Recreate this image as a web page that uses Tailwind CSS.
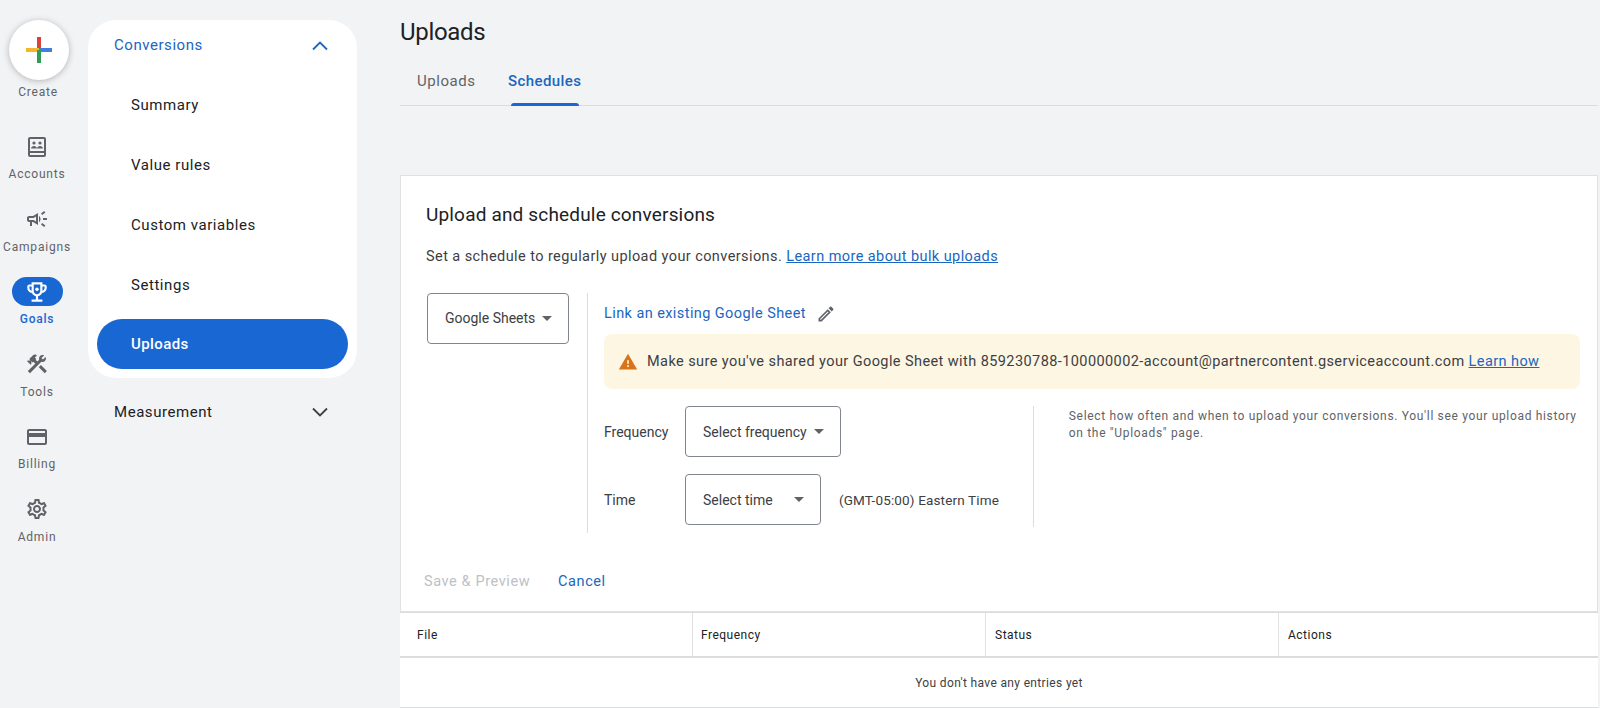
<!DOCTYPE html>
<html lang="en">
<head>
  <meta charset="utf-8" />
  <title>Uploads</title>
  <script src="https://cdn.jsdelivr.net/npm/@tailwindcss/browser@4"></script>
</head>
<body class="bg-[#f2f3f5] font-['Roboto',sans-serif] text-[#3c4043]">
  <div class="flex h-[708px] w-[1600px] overflow-hidden">

    <!-- Icon rail -->
    <aside class="w-[88px] shrink-0 flex flex-col items-center pt-5 pr-[14px] text-[12px] leading-4 tracking-[0.8px] text-[#5f6368]">
      <div class="ml-[3px] w-[60px] h-[60px] rounded-full bg-white shadow-[0_1px_6px_rgba(60,64,67,0.35)] flex items-center justify-center">
        <svg width="26" height="26" viewBox="0 0 26 26" fill="none" stroke-width="4">
          <path d="M13 0v13" stroke="#d9423a" />
          <path d="M0 13h13" stroke="#f4b62a" />
          <path d="M13 13h13" stroke="#3f7fe0" />
          <path d="M13 13v13" stroke="#2f9e55" />
        </svg>
      </div>
      <span class="ml-[2px] mt-1 mb-[32px]">Create</span>

      <div class="flex flex-col gap-[22.5px] items-center">
        <a class="flex flex-col items-center gap-[5px]">
          <span class="h-[29px] flex items-center">
            <svg width="24" height="24" viewBox="0 0 24 24" fill="#5f6368"><path d="M5 2h14a2 2 0 0 1 2 2v16a2 2 0 0 1-2 2H5a2 2 0 0 1-2-2V4a2 2 0 0 1 2-2zm0 2v12h14V4H5zm0 14v2h14v-2H5z"/><circle cx="9" cy="8" r="1.6"/><circle cx="15" cy="8" r="1.6"/><path d="M6 13.5c0-1.6 1.6-2.5 3-2.5s3 .9 3 2.5H6zm6 0c0-1.6 1.6-2.5 3-2.5s3 .9 3 2.5h-6z"/></svg>
          </span>
          <span>Accounts</span>
        </a>
        <a class="flex flex-col items-center gap-[5px]">
          <span class="h-[29px] flex items-center">
            <svg width="24" height="24" viewBox="0 0 24 24" fill="#5f6368"><path d="M18 11v2h4v-2h-4zm-2 6.61c.96.71 2.21 1.65 3.2 2.39.4-.53.8-1.07 1.2-1.6-.99-.74-2.24-1.68-3.2-2.4-.4.54-.8 1.08-1.2 1.61zM20.4 5.6c-.4-.53-.8-1.07-1.2-1.6-.99.74-2.24 1.68-3.2 2.4.4.53.8 1.07 1.2 1.6.96-.72 2.21-1.65 3.2-2.4zM4 9c-1.1 0-2 .9-2 2v2c0 1.1.9 2 2 2h1v4h2v-4h1l5 3V6L8 9H4zm5.03 1.71L11 9.53v4.94l-1.97-1.18-.48-.29H4v-2h4.55l.48-.29zM15.5 12c0-1.33-.58-2.53-1.5-3.35v6.69c.92-.81 1.5-2.01 1.5-3.34z"/></svg>
          </span>
          <span>Campaigns</span>
        </a>
        <a class="flex flex-col items-center gap-[5px] text-[#1967d2] font-medium">
          <span class="h-[29px] w-[51px] rounded-full bg-[#1967d2] flex items-center justify-center">
            <svg width="26" height="26" viewBox="0 0 24 24" fill="#fff"><path d="M19 5h-2V3H7v2H5c-1.1 0-2 .9-2 2v1c0 2.55 1.92 4.63 4.39 4.94.63 1.5 1.98 2.63 3.61 2.96V19H7v2h10v-2h-4v-3.1c1.63-.33 2.98-1.46 3.61-2.96C19.08 12.63 21 10.55 21 8V7c0-1.1-.9-2-2-2zM5 8V7h2v3.82C5.84 10.4 5 9.3 5 8zm7 6c-1.65 0-3-1.35-3-3V5h6v6c0 1.65-1.35 3-3 3zm7-6c0 1.3-.84 2.4-2 2.82V7h2v1z"/><circle cx="12" cy="9.5" r="1.6"/></svg>
          </span>
          <span>Goals</span>
        </a>
        <a class="flex flex-col items-center gap-[5px]">
          <span class="h-[29px] flex items-center">
            <svg width="24" height="24" viewBox="0 0 24 24" fill="#5f6368"><path d="M13.783 15.172l2.121-2.121 5.996 5.996-2.121 2.121zM17.5 10c1.93 0 3.5-1.57 3.5-3.5 0-.58-.16-1.12-.41-1.6l-2.7 2.7-1.49-1.49 2.7-2.7c-.48-.25-1.02-.41-1.6-.41C15.57 3 14 4.57 14 6.5c0 .41.08.8.21 1.16l-1.85 1.85-1.78-1.78.71-.71-1.41-1.41L12 3.49c-1.17-1.17-3.07-1.17-4.24 0L4.22 7.03l1.41 1.41H2.81l-.71.71 3.54 3.54.71-.71V9.15l1.41 1.41.71-.71 1.78 1.78-7.41 7.41 2.12 2.12L16.34 9.79c.36.13.75.21 1.16.21z"/></svg>
          </span>
          <span>Tools</span>
        </a>
        <a class="flex flex-col items-center gap-[5px]">
          <span class="h-[29px] flex items-center">
            <svg width="24" height="24" viewBox="0 0 24 24" fill="#5f6368"><path d="M20 4H4c-1.11 0-1.99.89-1.99 2L2 18c0 1.11.89 2 2 2h16c1.11 0 2-.89 2-2V6c0-1.11-.89-2-2-2zm0 14H4v-6h16v6zm0-10H4V6h16v2z"/></svg>
          </span>
          <span>Billing</span>
        </a>
        <a class="flex flex-col items-center gap-[5px]">
          <span class="h-[29px] flex items-center">
            <svg width="24" height="24" viewBox="0 0 24 24" fill="#5f6368"><path d="M19.43 12.98c.04-.32.07-.64.07-.98 0-.34-.03-.66-.07-.98l2.11-1.65c.19-.15.24-.42.12-.64l-2-3.46c-.09-.16-.26-.25-.44-.25-.06 0-.12.01-.17.03l-2.49 1c-.52-.4-1.08-.73-1.69-.98l-.38-2.65C14.46 2.18 14.25 2 14 2h-4c-.25 0-.46.18-.49.42l-.38 2.65c-.61.25-1.17.59-1.69.98l-2.49-1c-.06-.02-.12-.03-.18-.03-.17 0-.34.09-.43.25l-2 3.46c-.13.22-.07.49.12.64l2.11 1.65c-.04.32-.07.65-.07.98 0 .33.03.66.07.98l-2.11 1.65c-.19.15-.24.42-.12.64l2 3.46c.09.16.26.25.44.25.06 0 .12-.01.17-.03l2.49-1c.52.4 1.08.73 1.69.98l.38 2.65c.03.24.24.42.49.42h4c.25 0 .46-.18.49-.42l.38-2.65c.61-.25 1.17-.59 1.69-.98l2.49 1c.06.02.12.03.18.03.17 0 .34-.09.43-.25l2-3.46c.12-.22.07-.49-.12-.64l-2.11-1.65zm-1.98-1.71c.04.31.05.52.05.73 0 .21-.02.43-.05.73l-.14 1.13.89.7 1.08.84-.7 1.21-1.27-.51-1.04-.42-.9.68c-.43.32-.84.56-1.25.73l-1.06.43-.16 1.13-.2 1.35h-1.4l-.19-1.35-.16-1.13-1.06-.43c-.43-.18-.83-.41-1.23-.71l-.91-.7-1.06.43-1.27.51-.7-1.21 1.08-.84.89-.7-.14-1.13c-.03-.31-.05-.54-.05-.74s.02-.43.05-.73l.14-1.13-.89-.7-1.08-.84.7-1.21 1.27.51 1.04.42.9-.68c.43-.32.84-.56 1.25-.73l1.06-.43.16-1.13.2-1.35h1.39l.19 1.35.16 1.13 1.06.43c.43.18.83.41 1.23.71l.91.7 1.06-.43 1.27-.51.7 1.21-1.07.85-.89.7.14 1.13zM12 8c-2.21 0-4 1.79-4 4s1.79 4 4 4 4-1.79 4-4-1.79-4-4-4zm0 6c-1.1 0-2-.9-2-2s.9-2 2-2 2 .9 2 2-.9 2-2 2z"/></svg>
          </span>
          <span>Admin</span>
        </a>
      </div>
    </aside>

    <!-- Section nav -->
    <nav class="w-[269px] shrink-0 mt-5 text-[15px] tracking-[0.55px] text-[#202124]">
      <div class="bg-white rounded-[28px] h-[358px] px-[9px]">
        <div class="h-[51px] pl-[17px] pr-[16px] flex items-center justify-between text-[#1a66c0]">
          <span>Conversions</span>
          <svg width="24" height="24" viewBox="0 0 24 24" fill="none" stroke="#1a66c0" stroke-width="1.8"><path d="M5 15.5l7-7 7 7"/></svg>
        </div>
        <div class="h-[60px] mt-[4px] pl-[34px] flex items-center">Summary</div>
        <div class="h-[60px] pl-[34px] flex items-center">Value rules</div>
        <div class="h-[60px] pl-[34px] flex items-center">Custom variables</div>
        <div class="h-[60px] pl-[34px] flex items-center">Settings</div>
        <div class="h-[50px] mt-[4px] pl-[34px] flex items-center rounded-full bg-[#1967d2] text-white font-medium tracking-[0.4px]">Uploads</div>
      </div>
      <div class="h-[50px] mt-[9px] pl-[26px] pr-[25px] flex items-center justify-between">
        <span>Measurement</span>
        <svg width="24" height="24" viewBox="0 0 24 24" fill="none" stroke="#3c4043" stroke-width="1.8"><path d="M5 8.5l7 7 7-7"/></svg>
      </div>
    </nav>

    <!-- Main -->
    <main class="ml-[43px] w-[1198px] shrink-0">
      <h1 class="mt-[18px] h-[28px] leading-[28px] text-[24px] tracking-[-0.3px] text-[#202124]">Uploads</h1>
      <div class="mt-[17px] h-[43px] border-b border-[#dadce0] flex text-[15px] tracking-[0.4px] font-medium">
        <a class="pl-[17px] w-[108px] pt-[7px] font-normal tracking-[0.55px] text-[#5f6368]">Uploads</a>
        <a class="relative pt-[7px] text-[#1a66c0]">
          Schedules
          <span class="absolute left-[3px] right-[2px] -bottom-px h-[3px] rounded-t-[3px] bg-[#1967d2]"></span>
        </a>
      </div>

      <section class="mt-[69px] bg-white border border-[#dfe1e5] h-[437px] pl-[26px] pr-[17px] flex flex-col">
        <h2 class="-ml-px mt-[27px] h-[24px] leading-6 text-[19px] tracking-[0.17px] text-[#202124]">Upload and schedule conversions</h2>
        <p class="-ml-px mt-[20px] h-[20px] leading-5 text-[14.5px] tracking-[0.42px]">
          Set a schedule to regularly upload your conversions.
          <a class="text-[#1a66c0] underline">Learn more about bulk uploads</a>
        </p>

        <div class="mt-[26px] flex">
          <div class="w-[142px] h-[51px] border border-[#80868b] rounded-[4px] flex items-center pl-[17px] pr-[16px] justify-between text-[14px]">
            <span>Google Sheets</span>
            <span class="w-0 h-0 border-x-[5px] border-x-transparent border-t-[5px] border-t-[#5f6368]"></span>
          </div>

          <div class="ml-[18px] w-[1px] h-[240px] bg-[#dadce0]"></div>

          <div class="ml-[16px] w-[976px]">
            <div class="mt-[11px] h-[20px] flex items-center gap-[10px] text-[14.5px] tracking-[0.42px] text-[#1a66c0]">
              <span>Link an existing Google Sheet</span>
              <svg width="20" height="20" viewBox="0 0 24 24" fill="#5f6368"><path d="M14.06 9.02l.92.92L5.92 19H5v-.92l9.06-9.06M17.66 3c-.25 0-.51.1-.7.29l-1.83 1.83 3.75 3.75 1.83-1.83c.39-.39.39-1.02 0-1.41l-2.34-2.34c-.2-.2-.45-.29-.71-.29zm-3.6 3.19L3 17.25V21h3.75L17.81 9.94l-3.75-3.75z"/></svg>
            </div>
            <div class="mt-[10px] h-[55px] rounded-[8px] bg-[#fdf6e3] flex items-center pl-[14px] gap-[9px] text-[14.5px] tracking-[0.42px]">
              <svg width="20" height="20" viewBox="0 0 24 24" fill="#d9731a"><path d="M1 21h22L12 2 1 21zm12-3h-2v-2h2v2zm0-4h-2v-4h2v4z"/></svg>
              <span>Make sure you've shared your Google Sheet with 859230788-100000002-account@partnercontent.gserviceaccount.com <a class="text-[#1a66c0] underline">Learn how</a></span>
            </div>

            <div class="mt-[17px] flex">
              <div class="w-[432px] text-[14px]">
                <div class="h-[51px] flex items-center">
                  <span class="w-[81px] mt-[2px]">Frequency</span>
                  <div class="w-[156px] h-[51px] border border-[#80868b] rounded-[4px] flex items-center pl-[17px] pr-[16px] justify-between">
                    <span class="mt-[2px]">Select frequency</span>
                    <span class="w-0 h-0 border-x-[5px] border-x-transparent border-t-[5px] border-t-[#5f6368]"></span>
                  </div>
                </div>
                <div class="mt-[17px] h-[51px] flex items-center">
                  <span class="w-[81px] mt-[2px]">Time</span>
                  <div class="w-[136px] h-[51px] border border-[#80868b] rounded-[4px] flex items-center pl-[17px] pr-[16px] justify-between">
                    <span class="mt-[2px]">Select time</span>
                    <span class="w-0 h-0 border-x-[5px] border-x-transparent border-t-[5px] border-t-[#5f6368]"></span>
                  </div>
                  <span class="ml-[18px] mt-[2px] text-[13.5px] tracking-[0.15px]">(GMT-05:00) Eastern Time</span>
                </div>
              </div>
              <div class="w-[1px] h-[121px] bg-[#dadce0]"></div>
              <p class="ml-[35px] w-[515px] pt-[2px] text-[12px] leading-[17px] tracking-[0.67px] text-[#5f6368]">
                Select how often and when to upload your conversions. You'll see your upload history on the "Uploads" page.
              </p>
            </div>
          </div>
        </div>

        <div class="mt-[38px] flex text-[14.5px] tracking-[0.6px]">
          <span class="-ml-[3px] w-[134px] text-[#bdc1c6]">Save &amp; Preview</span>
          <span class="text-[#1a66c0]">Cancel</span>
        </div>
      </section>

      <!-- Table -->
      <div class="bg-white">
        <div class="h-[46px] border-y border-[#dadce0] border-b-2 grid grid-cols-[292px_293px_293px_1fr] text-[12px] tracking-[0.5px] text-[#202124]">
          <div class="pl-[17px] flex items-center">File</div>
          <div class="pl-[8px] border-l border-[#e0e0e0] flex items-center">Frequency</div>
          <div class="pl-[9px] border-l border-[#e0e0e0] flex items-center">Status</div>
          <div class="pl-[9px] border-l border-[#e0e0e0] flex items-center">Actions</div>
        </div>
        <div class="h-[50px] border-b border-[#dadce0] flex items-center justify-center text-[12px] tracking-[0.35px]">
          You don't have any entries yet
        </div>
      </div>
    </main>
  </div>
</body>
</html>
